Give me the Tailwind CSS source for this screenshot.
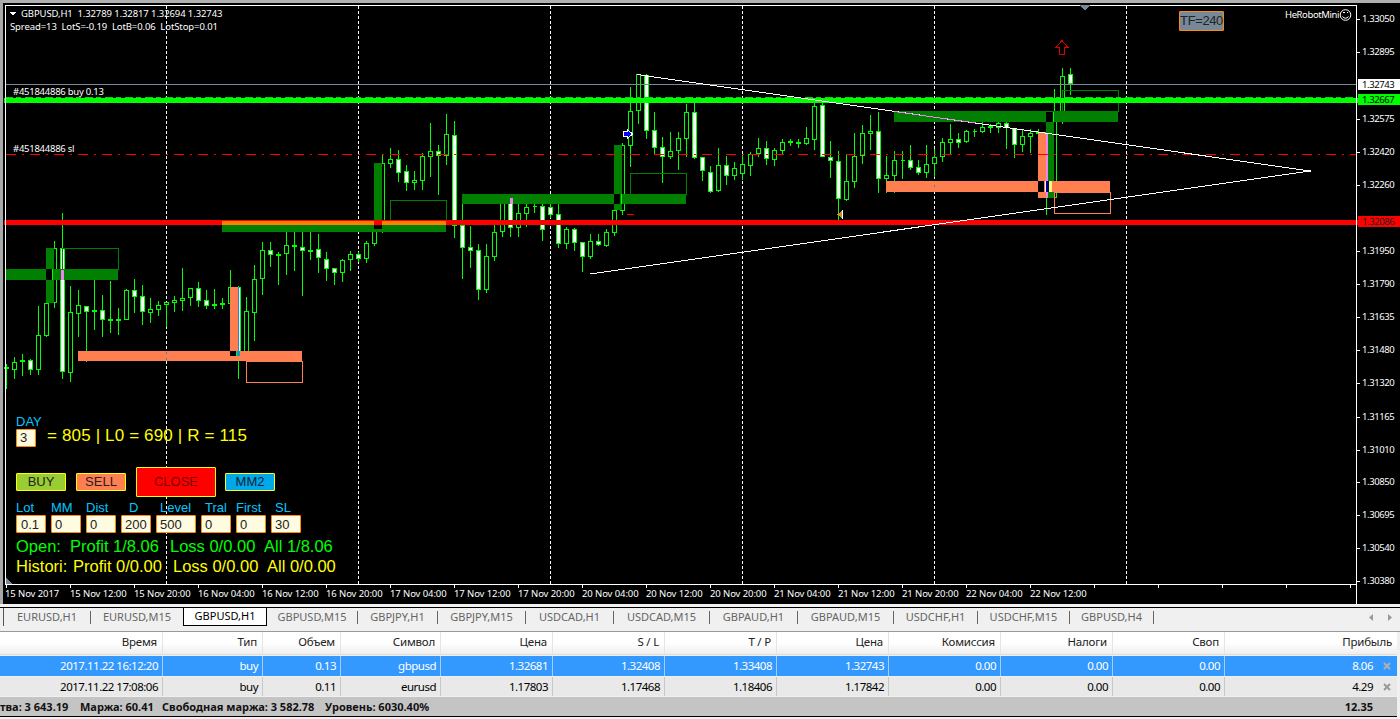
<!DOCTYPE html>
<html>
<head>
<meta charset="utf-8">
<script src="https://cdn.jsdelivr.net/npm/@tailwindcss/browser@4"></script>
<title>GBPUSD,H1</title>
</head>
<body class="w-[1400px] h-[719px] overflow-hidden bg-[#f0f0f0] font-['Noto_Sans',sans-serif]">
<!-- CHART -->
<div class="relative h-[604px] w-[1400px] overflow-hidden bg-black">
  <div class="absolute top-0 left-0 h-[3px] w-full bg-[#b0b0b0]"></div>
  <div class="absolute top-0 left-0 h-full w-[3px] bg-[#a8a8a8]"></div>
  <svg class="absolute top-0 left-0" width="1400" height="604" viewBox="0 0 1400 604" shape-rendering="crispEdges" fill="none">
    <!-- grid -->
    <g stroke="#fff" stroke-dasharray="3 2">
      <path d="M166.5 6V584M358.5 6V584M550.5 6V584M742.5 6V584M934.5 6V584M1126.5 6V584"/>
    </g>
    <path id="wicks" stroke="#00ff00"/>
    <path id="blackBodies" stroke="#00ff00" fill="#000"/>
    <path id="whiteBodies" stroke="#00ff00" fill="#fff"/>

    <!-- green zones -->
    <g fill="#007f00">
      <rect x="6" y="269" width="112" height="11"/>
      <rect x="46" y="248" width="8" height="55"/>
      <rect x="222" y="225" width="224" height="7"/>
      <rect x="374" y="163" width="8" height="62"/>
      <rect x="462" y="194" width="224" height="10"/>
      <rect x="614" y="145" width="8" height="65"/>
      <rect x="894" y="111" width="224" height="11"/>
      <rect x="1046" y="122" width="8" height="76"/>
    </g>
    <g fill="#000">
      <rect x="46" y="269" width="6" height="11"/>
      <rect x="374" y="225" width="8" height="4"/>
      <rect x="614" y="194" width="6" height="10"/>
      <rect x="1046" y="112" width="7" height="10"/>
    </g>
    <path d="M52.5 269V280M621.5 194V204M1053.5 112V122" stroke="#00ff00"/>
    <rect x="61" y="270" width="3" height="10" fill="#ee82ee"/>
    <rect x="510" y="198" width="3" height="6" fill="#ee82ee"/>
    <g fill="none" stroke="#007f00">
      <rect x="62.5" y="248.5" width="56" height="21"/>
      <rect x="390.5" y="200.5" width="56" height="21"/>
      <rect x="630.5" y="173.5" width="56" height="21"/>
      <rect x="1062.5" y="90.5" width="56" height="21"/>
    </g>

    <!-- coral zones -->
    <g fill="#ff7f50">
      <rect x="78" y="351" width="224" height="10"/>
      <rect x="230" y="287" width="8" height="64"/>
      <rect x="886" y="181" width="224" height="11"/>
      <rect x="1038" y="133" width="8" height="65"/>
    </g>
    <rect x="230" y="351" width="6" height="5" fill="#000"/>
    <rect x="236" y="351" width="4" height="5" fill="#00ff00"/>
    <rect x="237" y="351" width="3" height="5" fill="#1e90c8"/>
    <path d="M238.5 287V351" stroke="#1e90c8"/>
    <rect x="1038" y="181" width="6" height="11" fill="#000"/>
    <rect x="1046" y="133" width="2" height="65" fill="#ee82ee"/>
    <rect x="1045" y="181" width="3" height="11" fill="#fff"/>
    <rect x="1046" y="181" width="3" height="11" fill="#000090"/>
    <rect x="1049" y="181" width="3" height="11" fill="#ffff66"/>
    <rect x="1052" y="181" width="2" height="11" fill="#ff7f50"/>
    <g fill="none" stroke="#ff7f50">
      <rect x="246.5" y="361.5" width="56" height="21"/>
      <rect x="1054.5" y="192.5" width="56" height="21"/>
    </g>
    <path d="M166.5 352V354M166.5 358V360M934.5 185V187" stroke="#1e90c8"/>
    <path d="M627 214.5H634" stroke="#ff0000"/>
    <path d="M1039 154.5H1043" stroke="#007f7f"/>

    <!-- horizontal price lines -->
    <path d="M6 84.5H1356" stroke="#778899"/>
    <path d="M6 154.5H1356" stroke="#ff0000" stroke-dasharray="10 6 2 6"/>
    <path d="M5 97.5H1356" stroke="#00dd00" stroke-dasharray="8 3 5 4"/>
    <rect x="4" y="98" width="1396" height="5" fill="#00ff00"/>
    <rect x="4" y="220" width="1396" height="5" fill="#ff0000"/>
    <rect x="222" y="221" width="224" height="4" fill="#ff7f00"/>
    <rect x="374" y="221" width="8" height="4" fill="#ff0000"/>

    <!-- triangle -->
    <path d="M637 74.5L1310 171" stroke="#fff"/>
    <path d="M590 274L1310 171" stroke="#fff"/>
    <path d="M894 111.5L976 123" stroke="#ee82ee"/>
    <rect x="1308" y="170" width="3" height="2" fill="#fff"/>

    <!-- frame -->
    <path d="M5.5 5V585M5 5.5H1357M1356.5 5V604M5 584.5H1357" stroke="#fff"/>
    <path d="M1080 5H1090L1085 11Z" fill="#778899" stroke="none"/>
    <path d="M6 578V584H12Z" fill="#778899" stroke="none"/>

    <!-- axis ticks -->
    <path stroke="#fff" d="M6.5 585V588M70.5 585V588M134.5 585V588M198.5 585V588M262.5 585V588M326.5 585V588M390.5 585V588M454.5 585V588M518.5 585V588M582.5 585V588M646.5 585V588M710.5 585V588M774.5 585V588M838.5 585V588M902.5 585V588M966.5 585V588M1030.5 585V588M1094.5 585V588M1158.5 585V588M1222.5 585V588M1286.5 585V588M1350.5 585V588"/>
    <path stroke="#fff" d="M1357 19.5H1360M1357 52.5H1360M1357 119.5H1360M1357 152.5H1360M1357 185.5H1360M1357 251.5H1360M1357 284.5H1360M1357 317.5H1360M1357 350.5H1360M1357 383.5H1360M1357 417.5H1360M1357 450.5H1360M1357 482.5H1360M1357 515.5H1360M1357 548.5H1360M1357 581.5H1360"/>

    <!-- objects -->
    <path d="M1062 40.5L1068 47.5H1064.5V54.5H1059.5V47.5H1056Z" stroke="#dd0000" stroke-width="1"/>
    <path d="M623.5 131.5H627.5V129.5L632.5 134L627.5 138.5V136.5H623.5Z" fill="#0000ff" stroke="#fff" stroke-width="1"/>
    <path d="M842 211V218L837 214.5Z" fill="#c89030" stroke="none"/>
    <path d="M842.5 210V219" stroke="#fff"/>
    <path d="M10 12H16L13 16Z" fill="#fff" stroke="none"/>
    <g shape-rendering="auto" stroke="#fff" fill="none">
      <circle cx="1345.5" cy="15" r="5.3"/>
      <path d="M1342.5 16.5Q1345.5 20 1348.5 16.5"/>
    </g>
    <path d="M1343 12.5H1344.5M1346.5 12.5H1348" stroke="#fff"/>
  </svg>

  <!-- chart captions -->
  <div class="absolute left-[21px] top-[7px] text-[9.5px] tracking-[-0.1px] leading-[13px] text-white whitespace-pre">GBPUSD,H1  1.32789 1.32817 1.32694 1.32743</div>
  <div class="absolute left-[10px] top-[20px] text-[9.5px] tracking-[-0.1px] leading-[13px] text-white whitespace-pre">Spread=13  LotS=-0.19  LotB=0.06  LotStop=0.01</div>
  <div class="absolute left-[13px] top-[85px] text-[9.5px] tracking-[-0.25px] leading-[13px] text-white">#451844886 buy 0.13</div>
  <div class="absolute left-[13px] top-[142px] text-[9.5px] tracking-[-0.25px] leading-[13px] text-white">#451844886 sl</div>
  <div class="absolute left-[1285px] top-[8px] text-[9.5px] tracking-[-0.4px] leading-[13px] text-white">HeRobotMini</div>
  <div class="absolute left-[1179px] top-[11px] flex h-[20px] w-[45px] items-center justify-center rounded-[1px] border border-[#ff8c00] bg-[#778899] font-['Liberation_Sans',sans-serif] text-[13px] tracking-[-0.4px] text-[#222]">TF=240</div>

  <!-- price scale -->
  <div class="absolute left-[1358px] top-0 h-full w-[42px] text-[9.5px] tracking-[-0.4px] leading-[12px] text-white">
    <span class="absolute left-[4px] top-[13px]">1.33050</span>
    <span class="absolute left-[4px] top-[46px]">1.32895</span>
    <span class="absolute left-0 top-[79px] h-[11px] w-[42px] bg-white pl-[4px] leading-[11px] text-black">1.32743</span>
    <span class="absolute left-0 top-[94px] h-[11px] w-[42px] bg-[#00ff00] pl-[4px] leading-[11px] text-black">1.32667</span>
    <span class="absolute left-[4px] top-[113px]">1.32575</span>
    <span class="absolute left-[4px] top-[146px]">1.32420</span>
    <span class="absolute left-[4px] top-[179px]">1.32260</span>
    <span class="absolute left-0 top-[216px] h-[11px] w-[42px] bg-[#ff0000] pl-[4px] leading-[11px] text-[#222]">1.32086</span>
    <span class="absolute left-[4px] top-[245px]">1.31950</span>
    <span class="absolute left-[4px] top-[278px]">1.31790</span>
    <span class="absolute left-[4px] top-[311px]">1.31635</span>
    <span class="absolute left-[4px] top-[344px]">1.31480</span>
    <span class="absolute left-[4px] top-[377px]">1.31320</span>
    <span class="absolute left-[4px] top-[411px]">1.31165</span>
    <span class="absolute left-[4px] top-[444px]">1.31010</span>
    <span class="absolute left-[4px] top-[476px]">1.30850</span>
    <span class="absolute left-[4px] top-[509px]">1.30695</span>
    <span class="absolute left-[4px] top-[542px]">1.30540</span>
    <span class="absolute left-[4px] top-[575px]">1.30380</span>
  </div>

  <!-- time axis -->
  <div class="absolute left-[5px] top-[587px] flex text-[9.5px] tracking-[-0.1px] leading-[13px] text-white whitespace-nowrap">
    <span class="w-[65px]">15 Nov 2017</span>
    <span class="w-[64px]">15 Nov 12:00</span>
    <span class="w-[64px]">15 Nov 20:00</span>
    <span class="w-[64px]">16 Nov 04:00</span>
    <span class="w-[64px]">16 Nov 12:00</span>
    <span class="w-[64px]">16 Nov 20:00</span>
    <span class="w-[64px]">17 Nov 04:00</span>
    <span class="w-[64px]">17 Nov 12:00</span>
    <span class="w-[64px]">17 Nov 20:00</span>
    <span class="w-[64px]">20 Nov 04:00</span>
    <span class="w-[64px]">20 Nov 12:00</span>
    <span class="w-[64px]">20 Nov 20:00</span>
    <span class="w-[64px]">21 Nov 04:00</span>
    <span class="w-[64px]">21 Nov 12:00</span>
    <span class="w-[64px]">21 Nov 20:00</span>
    <span class="w-[64px]">22 Nov 04:00</span>
    <span class="w-[64px]">22 Nov 12:00</span>
  </div>

  <!-- trading panel -->
  <div class="absolute left-[16px] top-[414px] w-[330px] font-['Liberation_Sans',sans-serif]">
    <div class="h-[15px] text-[13px] leading-[15px] text-[#00c8ff]">DAY</div>
    <div class="flex h-[18px] items-center">
      <div class="flex h-[18px] w-[20px] items-center rounded-[1px] border border-[#ff8c00] bg-[#fffbe0] pl-[3px] text-[13px] text-[#222]">3</div>
      <div class="-mt-[4px] ml-[11px] whitespace-pre text-[17px] tracking-[0.15px] text-[#ffff00]">= 805 | L0 = 690 | R = 115</div>
    </div>
    <div class="mt-[20px] flex h-[30px] items-center">
      <button class="flex h-[18px] w-[50px] items-center justify-center rounded-[1px] border border-[#ffff00] bg-[#9acd32] text-[13px] text-[#222]">BUY</button>
      <button class="ml-[10px] flex h-[18px] w-[50px] items-center justify-center rounded-[1px] border border-[#ffff00] bg-[#ff7f50] text-[13px] text-[#222]">SELL</button>
      <button class="ml-[10px] flex h-[30px] w-[80px] items-center justify-center rounded-[1px] border border-[#ffff00] bg-[#ff0000] text-[13px] text-[#700]">CLOSE</button>
      <button class="ml-[9px] flex h-[18px] w-[50px] items-center justify-center rounded-[1px] border border-[#ffff00] bg-[#00a8e8] text-[13px] text-[#123]">MM2</button>
    </div>
    <div class="mt-[3px] flex gap-[5px] text-[13px] leading-[15px] text-[#00c8ff]">
      <div class="w-[30px] flex flex-col"><span class="h-[15px]">Lot</span><span class="flex h-[18px] items-center rounded-[1px] border border-[#ff8c00] bg-[#fffbe0] pl-[4px] text-[#222]">0.1</span></div>
      <div class="w-[30px] flex flex-col"><span class="h-[15px]">MM</span><span class="flex h-[18px] items-center rounded-[1px] border border-[#ff8c00] bg-[#fffbe0] pl-[3px] text-[#222]">0</span></div>
      <div class="w-[30px] flex flex-col"><span class="h-[15px]">Dist</span><span class="flex h-[18px] items-center rounded-[1px] border border-[#ff8c00] bg-[#fffbe0] pl-[3px] text-[#222]">0</span></div>
      <div class="w-[30px] flex flex-col"><span class="h-[15px] pl-[8px]">D</span><span class="flex h-[18px] items-center rounded-[1px] border border-[#ff8c00] bg-[#fffbe0] pl-[3px] text-[#222]">200</span></div>
      <div class="w-[40px] flex flex-col"><span class="h-[15px] pl-[4px]">Level</span><span class="flex h-[18px] items-center rounded-[1px] border border-[#ff8c00] bg-[#fffbe0] pl-[3px] text-[#222]">500</span></div>
      <div class="w-[30px] flex flex-col"><span class="h-[15px] pl-[4px]">Tral</span><span class="flex h-[18px] items-center rounded-[1px] border border-[#ff8c00] bg-[#fffbe0] pl-[3px] text-[#222]">0</span></div>
      <div class="w-[30px] flex flex-col"><span class="h-[15px]">First</span><span class="flex h-[18px] items-center rounded-[1px] border border-[#ff8c00] bg-[#fffbe0] pl-[3px] text-[#222]">0</span></div>
      <div class="w-[30px] flex flex-col"><span class="h-[15px] pl-[4px]">SL</span><span class="flex h-[18px] items-center rounded-[1px] border border-[#ff8c00] bg-[#fffbe0] pl-[3px] text-[#222]">30</span></div>
    </div>
    <div class="mt-[3px] flex h-[20px] items-center whitespace-nowrap text-[16.5px] text-[#00ff00]">
      <span class="w-[54px]">Open:</span><span class="w-[100px]">Profit 1/8.06</span><span class="w-[94px]">Loss 0/0.00</span><span>All 1/8.06</span>
    </div>
    <div class="flex h-[20px] items-center whitespace-nowrap text-[16.5px] text-[#ffff00]">
      <span class="w-[57px]">Histori:</span><span class="w-[100px]">Profit 0/0.00</span><span class="w-[94px]">Loss 0/0.00</span><span>All 0/0.00</span>
    </div>
  </div>
</div>

<!-- TABS -->
<div class="h-[3px]"></div>
<div class="flex h-[19px] w-[1400px] border-t border-black bg-[#f0f0f0] text-[11px] text-[#666]">
  <div class="h-[18px] w-[4px] border-r border-[#555]"></div>
  <div class="flex h-[18px] w-[87px] items-center justify-center"><span class="flex h-[13px] w-full items-center justify-center border-r border-[#666]">EURUSD,H1</span></div>
  <div class="flex h-[18px] w-[92px] items-center justify-center">EURUSD,M15</div>
  <div class="-mt-[1px] flex h-[19px] w-[84px] items-center justify-center border border-black bg-white text-black">GBPUSD,H1</div>
  <div class="flex h-[18px] w-[91px] items-center justify-center"><span class="flex h-[13px] w-full items-center justify-center border-r border-[#666]">GBPUSD,M15</span></div>
  <div class="flex h-[18px] w-[80px] items-center justify-center"><span class="flex h-[13px] w-full items-center justify-center border-r border-[#666]">GBPJPY,H1</span></div>
  <div class="flex h-[18px] w-[88px] items-center justify-center"><span class="flex h-[13px] w-full items-center justify-center border-r border-[#666]">GBPJPY,M15</span></div>
  <div class="flex h-[18px] w-[88px] items-center justify-center"><span class="flex h-[13px] w-full items-center justify-center border-r border-[#666]">USDCAD,H1</span></div>
  <div class="flex h-[18px] w-[96px] items-center justify-center"><span class="flex h-[13px] w-full items-center justify-center border-r border-[#666]">USDCAD,M15</span></div>
  <div class="flex h-[18px] w-[88px] items-center justify-center"><span class="flex h-[13px] w-full items-center justify-center border-r border-[#666]">GBPAUD,H1</span></div>
  <div class="flex h-[18px] w-[96px] items-center justify-center"><span class="flex h-[13px] w-full items-center justify-center border-r border-[#666]">GBPAUD,M15</span></div>
  <div class="flex h-[18px] w-[84px] items-center justify-center"><span class="flex h-[13px] w-full items-center justify-center border-r border-[#666]">USDCHF,H1</span></div>
  <div class="flex h-[18px] w-[92px] items-center justify-center"><span class="flex h-[13px] w-full items-center justify-center border-r border-[#666]">USDCHF,M15</span></div>
  <div class="flex h-[18px] w-[84px] items-center justify-center"><span class="flex h-[13px] w-full items-center justify-center border-r border-[#666]">GBPUSD,H4</span></div>
  <div class="ml-auto mr-[8px] flex h-[18px] items-center gap-[15px]">
    <svg width="4" height="7" viewBox="0 0 4 7"><path d="M4 0V7L0 3.5Z" fill="#999"/></svg>
    <svg width="4" height="7" viewBox="0 0 4 7"><path d="M0 0V7L4 3.5Z" fill="#999"/></svg>
  </div>
</div>
<div class="h-[5px]"></div>

<!-- TABLE -->
<div class="w-[1400px] border-t border-[#999] text-[11.5px] leading-[20px]">
  <div class="grid h-[23px] w-[1397px] grid-cols-[163px_100px_78px_100px_112px_112px_112px_112px_112px_112px_112px_172px] border-b border-[#ddd] bg-linear-to-b from-white via-white to-[#eee] tracking-[-0.2px] text-[#222]">
    <div class="border-r border-[#e4e4e4] pr-[5px] text-right">Время</div>
    <div class="border-r border-[#e4e4e4] pr-[5px] text-right">Тип</div>
    <div class="border-r border-[#e4e4e4] pr-[5px] text-right">Объем</div>
    <div class="border-r border-[#e4e4e4] pr-[5px] text-right">Символ</div>
    <div class="border-r border-[#e4e4e4] pr-[5px] text-right">Цена</div>
    <div class="border-r border-[#e4e4e4] pr-[5px] text-right">S / L</div>
    <div class="border-r border-[#e4e4e4] pr-[5px] text-right">T / P</div>
    <div class="border-r border-[#e4e4e4] pr-[5px] text-right">Цена</div>
    <div class="border-r border-[#e4e4e4] pr-[5px] text-right">Комиссия</div>
    <div class="border-r border-[#e4e4e4] pr-[5px] text-right">Налоги</div>
    <div class="border-r border-[#e4e4e4] pr-[5px] text-right">Своп</div>
    <div class="pr-[5px] text-right">Прибыль</div>
  </div>
  <div class="mt-[1px] grid h-[20px] w-[1397px] grid-cols-[163px_100px_78px_100px_112px_112px_112px_112px_112px_112px_112px_172px] bg-[#3399ff] tracking-[-0.5px] text-white">
    <div class="border-r border-[#a8cdf2] pr-[4px] text-right">2017.11.22 16:12:20</div>
    <div class="border-r border-[#a8cdf2] pr-[4px] text-right">buy</div>
    <div class="border-r border-[#a8cdf2] pr-[4px] text-right">0.13</div>
    <div class="border-r border-[#a8cdf2] pr-[4px] text-right">gbpusd</div>
    <div class="border-r border-[#a8cdf2] pr-[4px] text-right">1.32681</div>
    <div class="border-r border-[#a8cdf2] pr-[4px] text-right">1.32408</div>
    <div class="border-r border-[#a8cdf2] pr-[4px] text-right">1.33408</div>
    <div class="border-r border-[#a8cdf2] pr-[4px] text-right">1.32743</div>
    <div class="border-r border-[#a8cdf2] pr-[4px] text-right">0.00</div>
    <div class="border-r border-[#a8cdf2] pr-[4px] text-right">0.00</div>
    <div class="border-r border-[#a8cdf2] pr-[4px] text-right">0.00</div>
    <div class="flex items-center justify-end gap-[10px] pr-[6px]">8.06<svg width="8" height="8" viewBox="0 0 8 8"><path d="M1 1L7 7M7 1L1 7" stroke="#b0b0b0" stroke-width="2"/></svg></div>
  </div>
  <div class="mt-[1px] grid h-[19px] w-[1397px] grid-cols-[163px_100px_78px_100px_112px_112px_112px_112px_112px_112px_112px_172px] bg-[#e9e9e9] leading-[19px] tracking-[-0.5px] text-black">
    <div class="border-r border-[#c8c8c8] pr-[4px] text-right">2017.11.22 17:08:06</div>
    <div class="border-r border-[#c8c8c8] pr-[4px] text-right">buy</div>
    <div class="border-r border-[#c8c8c8] pr-[4px] text-right">0.11</div>
    <div class="border-r border-[#c8c8c8] pr-[4px] text-right">eurusd</div>
    <div class="border-r border-[#c8c8c8] pr-[4px] text-right">1.17803</div>
    <div class="border-r border-[#c8c8c8] pr-[4px] text-right">1.17468</div>
    <div class="border-r border-[#c8c8c8] pr-[4px] text-right">1.18406</div>
    <div class="border-r border-[#c8c8c8] pr-[4px] text-right">1.17842</div>
    <div class="border-r border-[#c8c8c8] pr-[4px] text-right">0.00</div>
    <div class="border-r border-[#c8c8c8] pr-[4px] text-right">0.00</div>
    <div class="border-r border-[#c8c8c8] pr-[4px] text-right">0.00</div>
    <div class="flex items-center justify-end gap-[10px] pr-[6px]">4.29<svg width="8" height="8" viewBox="0 0 8 8"><path d="M1 1L7 7M7 1L1 7" stroke="#999" stroke-width="2"/></svg></div>
  </div>
  <div class="mt-[1px] flex h-[20px] w-[1397px] items-center justify-between border-b border-black bg-[#c4c4c4] pr-[24px] text-[11px] font-bold leading-[19px] text-[#111]">
    <div class="flex whitespace-nowrap">
      <span class="w-[80px]">тва: 3 643.19</span><span class="w-[82px]">Маржа: 60.41</span><span class="w-[163px]">Свободная маржа: 3 582.78</span><span>Уровень: 6030.40%</span>
    </div>
    <div>12.35</div>
  </div>
</div>

<script>
// candle rows: column, wick top, wick bottom, body top, body bottom, white body
var z8=[[6,462,537,470,478,1],[14,441,507,457,479,0],[22,432,498,451,457,0],[30,447,495,451,479,1],[38,288,495,376,479,0],[46,198,381,280,378,0],[54,93,293,115,280,0],[62,10,507,115,485,1],[70,228,515,307,488,0],[78,240,381,286,311,0],[86,290,455,289,305,1],[94,210,360,301,305,0],[102,255,381,301,329,1],[110,213,369,328,332,0],[118,294,375,328,332,0],[126,237,330,241,329,0],[134,207,309,241,260,1],[142,225,345,259,307,1],[150,264,339,298,308,0],[158,273,318,286,299,0],[166,275,351,277,284,0],[174,258,306,271,278,0],[182,174,303,265,272,0],[190,234,288,235,265,0],[198,216,291,235,272,1],[206,240,297,271,289,1],[214,237,297,283,289,0],[222,264,297,280,284,0],[230,180,285,232,281,0],[238,228,507,232,437,1],[246,262,438,304,430,0],[254,165,393,208,308,0],[262,96,255,121,208,0],[270,96,171,121,136,1],[278,126,225,133,139,0],[286,60,195,106,133,0],[294,60,183,106,112,1],[302,60,258,112,124,1],[310,60,150,121,125,0],[318,72,189,118,145,1],[326,126,213,148,176,1],[334,174,225,175,190,1],[342,147,216,151,190,0]];
var z6=[[350,574,632,583,601,0],[358,575,607,583,598,1],[366,543,609,550,596,0],[374,495,557,508,551,0],[382,283,520,310,508,0],[390,264,324,298,311,0],[398,270,366,298,338,1],[406,315,393,334,368,1],[414,333,390,361,368,0],[422,280,390,289,362,0],[430,189,351,274,290,0],[438,255,405,274,288,1],[446,162,315,223,287,0],[454,183,534,226,497,1],[462,430,657,495,564,1],[470,498,624,562,572,1],[478,552,720,571,690,1],[486,552,699,589,690,0],[494,495,603,516,591,0],[502,420,531,420,516,0],[510,414,531,414,504,1],[518,432,531,460,504,0],[526,432,501,442,461,0],[534,432,459,438,442,0],[542,432,543,439,510,1],[550,432,474,441,465,1],[558,432,564,463,552,1],[566,501,567,507,552,0],[574,504,573,508,549,1],[582,546,636,546,591,1],[590,522,597,544,591,0],[598,522,558,544,555,1],[606,507,561,516,558,0],[614,450,528,450,519,0],[622,249,465,256,453,0],[630,81,321,153,258,0],[638,42,192,42,153,0],[646,42,237,45,213,1],[654,156,285,210,264,1],[662,231,370,261,291,1],[670,216,297,273,291,0],[678,216,330,235,273,0],[686,132,291,156,237,0],[694,129,297,156,294,1]];
var z7=[[702,291,363,292,334,1],[710,318,399,335,396,1],[718,264,396,316,394,0],[726,288,375,316,348,1],[734,306,360,325,348,0],[742,282,360,313,342,0],[750,277,348,283,317,0],[758,234,291,263,281,0],[766,243,315,263,298,1],[774,264,318,270,300,0],[782,237,282,247,272,0],[790,237,258,244,250,0],[798,237,264,246,251,0],[806,201,255,235,251,0],[814,130,270,139,239,0],[822,130,292,136,290,1],[830,243,354,290,304,1],[838,273,480,304,418,1],[846,285,424,364,421,0],[854,219,384,289,365,0],[862,195,312,220,287,0],[870,165,270,214,223,0],[878,156,399,214,356,1],[886,288,399,346,356,0],[894,274,399,301,347,0],[902,273,357,300,304,0],[910,255,330,301,323,1],[918,300,345,322,338,1],[926,255,354,311,338,0],[934,267,351,292,311,0],[942,234,306,246,292,0],[950,192,285,238,250,0],[958,220,264,238,248,1],[966,210,249,214,245,0],[974,207,231,212,215,0],[982,187,219,200,215,0],[990,192,219,199,203,0],[998,181,219,190,203,0],[1006,186,267,190,205,1],[1014,205,294,205,254,1],[1022,210,276,229,254,0],[1030,207,279,220,230,0],[1038,207,270,216,222,0],[1046,225,465,216,414,1],[1054,87,415,156,414,0],[1062,24,192,48,156,0],[1070,24,105,42,72,1]];
var wicks='',black='',white='';
function add(rows,origin){rows.forEach(function(c){
  var x=c[0],wt=Math.round(origin+c[1]/3),wb=Math.round(origin+c[2]/3),bt=Math.round(origin+c[3]/3),bb=Math.round(origin+c[4]/3);
  wicks+='M'+(x+.5)+' '+wt+'V'+wb;
  var d='M'+(x-1.5)+' '+(bt+.5)+'H'+(x+2.5)+'V'+(bb-.5)+'H'+(x-1.5)+'Z';
  if(c[5])white+=d;else black+=d;
});}
add(z8,210);add(z6,60);add(z7,60);
document.getElementById('wicks').setAttribute('d',wicks);
document.getElementById('blackBodies').setAttribute('d',black);
document.getElementById('whiteBodies').setAttribute('d',white);
</script>
</body>
</html>
